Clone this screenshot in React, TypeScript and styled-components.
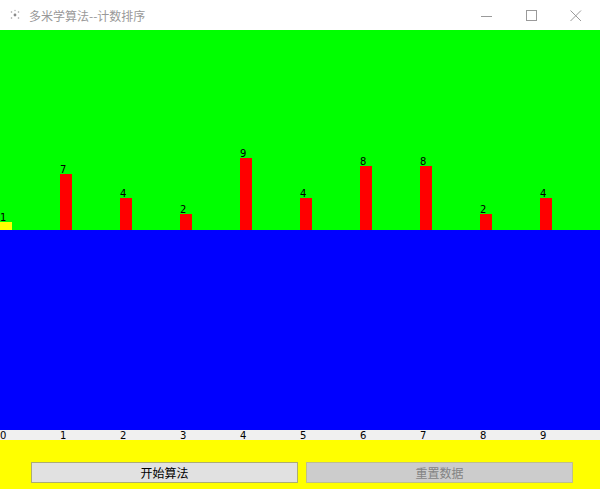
import styled, { createGlobalStyle } from 'styled-components';

const GlobalStyle = createGlobalStyle`
  html, body {
    margin: 0;
    padding: 0;
    background: #ffffff;
  }
`;

const data = [1, 7, 4, 2, 9, 4, 8, 8, 2, 4];
const UNIT = 8;

const App = () => {
  return (
    <Window>
      <GlobalStyle />
      <TitleBar>
        <AppIcon viewBox="0 0 12 12">
          <circle cx="6" cy="6" r="1.4" fill="#8a8a8a" />
          <circle cx="2.5" cy="3" r="0.8" fill="#a0a0a0" />
          <circle cx="9.5" cy="3" r="0.8" fill="#a0a0a0" />
          <circle cx="2.5" cy="9" r="0.8" fill="#a0a0a0" />
          <circle cx="9.5" cy="9" r="0.8" fill="#a0a0a0" />
          <circle cx="6" cy="1.5" r="0.7" fill="#b0b0b0" />
        </AppIcon>
        <Title>多米学算法--计数排序</Title>
        <Controls>
          <ControlButton>
            <svg width="12" height="12" viewBox="0 0 12 12">
              <line x1="0" y1="6.5" x2="11" y2="6.5" stroke="#9a9a9a" strokeWidth="1" />
            </svg>
          </ControlButton>
          <ControlButton>
            <svg width="12" height="12" viewBox="0 0 12 12">
              <rect x="0.5" y="0.5" width="10" height="10" fill="none" stroke="#9a9a9a" strokeWidth="1" />
            </svg>
          </ControlButton>
          <ControlButton>
            <svg width="12" height="12" viewBox="0 0 12 12">
              <line x1="0.5" y1="0.5" x2="11" y2="11" stroke="#9a9a9a" strokeWidth="1" />
              <line x1="11" y1="0.5" x2="0.5" y2="11" stroke="#9a9a9a" strokeWidth="1" />
            </svg>
          </ControlButton>
        </Controls>
      </TitleBar>

      <Chart>
        {data.map((value, i) => (
          <Slot key={i}>
            <Value>{value}</Value>
            <Bar $active={i === 0} style={{ height: value * UNIT }} />
          </Slot>
        ))}
      </Chart>
      <Bucket />
      <Axis>
        {data.map((_, i) => (
          <Tick key={i}>{i}</Tick>
        ))}
      </Axis>

      <ControlBar>
        <ActionButton>开始算法</ActionButton>
        <ActionButton disabled>重置数据</ActionButton>
      </ControlBar>
    </Window>
  );
};

const Window = styled.div`
  width: 600px;
  height: 489px;
  display: flex;
  flex-direction: column;
  overflow: hidden;
  font-family: "Liberation Sans", "Noto Sans CJK SC", sans-serif;
`;

const TitleBar = styled.div`
  height: 30px;
  background: #ffffff;
  display: flex;
  align-items: center;
  padding-left: 9px;
`;

const AppIcon = styled.svg`
  width: 12px;
  height: 12px;
  margin-right: 8px;
`;

const Title = styled.span`
  font-family: "Noto Sans CJK SC", sans-serif;
  font-size: 12px;
  color: #999999;
  flex: 1;
`;

const Controls = styled.div`
  display: flex;
  height: 100%;
`;

const ControlButton = styled.div`
  width: 45px;
  height: 100%;
  display: flex;
  align-items: center;
  justify-content: center;
  padding-top: 1px;
  box-sizing: border-box;
  &:last-child {
    width: 46px;
    padding-right: 2px;
  }
`;

const Chart = styled.div`
  height: 200px;
  background: #00ff00;
  display: flex;
  align-items: flex-end;
`;

const Slot = styled.div`
  width: 60px;
  flex: none;
  display: flex;
  flex-direction: column;
  align-items: flex-start;
`;

const Value = styled.span`
  font-family: "DejaVu Sans", sans-serif;
  font-size: 10px;
  line-height: 9px;
  color: #000000;
`;

const Bar = styled.div<{ $active: boolean }>`
  width: 12px;
  background: ${(p) => (p.$active ? '#ffff00' : '#ff0000')};
`;

const Bucket = styled.div`
  height: 200px;
  background: #0000ff;
`;

const Axis = styled.div`
  height: 10px;
  background: #f0f0f0;
  display: flex;
`;

const Tick = styled.span`
  width: 60px;
  flex: none;
  font-family: "DejaVu Sans", sans-serif;
  font-size: 10px;
  line-height: 10px;
  color: #000000;
  margin-top: 1px;
`;

const ControlBar = styled.div`
  flex: 1;
  background: #ffff00;
  display: flex;
  align-items: flex-start;
  padding: 22px 0 0 31px;
  gap: 8px;
`;

const ActionButton = styled.button`
  width: 267px;
  height: 21px;
  margin: 0;
  padding: 0;
  box-sizing: border-box;
  font-family: "Noto Sans CJK SC", sans-serif;
  font-size: 12px;
  line-height: 19px;
  background: #e1e1e1;
  border: 1px solid #adad73;
  color: #000000;
  &:disabled {
    background: #cccccc;
    border-color: #bfbf8c;
    color: #838383;
  }
`;

export default App;
